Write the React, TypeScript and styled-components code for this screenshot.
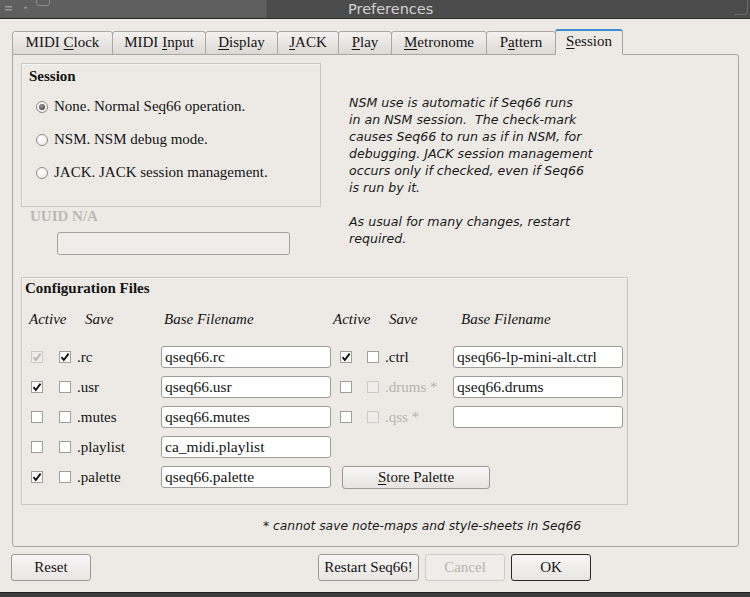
import styled, { createGlobalStyle, css } from 'styled-components';

const SERIF = `'Liberation Serif', 'Times New Roman', serif`;
const SANS = `'DejaVu Sans', 'Liberation Sans', sans-serif`;

const GlobalStyle = createGlobalStyle`
  html, body {
    margin: 0;
    padding: 0;
  }
  body {
    width: 750px;
    height: 597px;
    overflow: hidden;
    background: #edeae6;
    font-family: ${SERIF};
    color: #141414;
  }
  * {
    box-sizing: border-box;
  }
`;

const tabs = [
  { pre: 'MIDI ', key: 'C', post: 'lock', w: 101 },
  { pre: 'MIDI ', key: 'I', post: 'nput', w: 94 },
  { pre: '', key: 'D', post: 'isplay', w: 73 },
  { pre: '', key: 'J', post: 'ACK', w: 62 },
  { pre: '', key: 'P', post: 'lay', w: 54 },
  { pre: '', key: 'M', post: 'etronome', w: 96 },
  { pre: 'P', key: 'a', post: 'ttern', w: 70 },
  { pre: '', key: 'S', post: 'ession', w: 68, active: true },
];

type Box = 'on' | 'off' | 'dimOn' | 'dimOff';

interface FileRow {
  active: Box;
  save: Box;
  label: string;
  dim?: boolean;
  value: string;
}

const leftRows: FileRow[] = [
  { active: 'dimOn', save: 'on', label: '.rc', value: 'qseq66.rc' },
  { active: 'on', save: 'off', label: '.usr', value: 'qseq66.usr' },
  { active: 'off', save: 'off', label: '.mutes', value: 'qseq66.mutes' },
  { active: 'off', save: 'off', label: '.playlist', value: 'ca_midi.playlist' },
  { active: 'on', save: 'off', label: '.palette', value: 'qseq66.palette' },
];

const rightRows: (FileRow | null)[] = [
  { active: 'on', save: 'off', label: '.ctrl', value: 'qseq66-lp-mini-alt.ctrl' },
  { active: 'off', save: 'dimOff', label: '.drums *', dim: true, value: 'qseq66.drums' },
  { active: 'off', save: 'dimOff', label: '.qss *', dim: true, value: '' },
  null,
  null,
];

const NOTE = `NSM use is automatic if Seq66 runs
in an NSM session.  The check-mark
causes Seq66 to run as if in NSM, for
debugging. JACK session management
occurs only if checked, even if Seq66
is run by it.

As usual for many changes, restart
required.`;

function CheckBox({ state }: { state: Box }) {
  const dim = state === 'dimOn' || state === 'dimOff';
  const on = state === 'on' || state === 'dimOn';
  return (
    <StCheck $dim={dim}>
      {on && (
        <svg width="10" height="10" viewBox="0 0 10 10">
          <path d="M1.5 5.2 L3.8 8 L8.6 1.6" fill="none" stroke={dim ? '#b9b5b1' : '#111'} strokeWidth="1.9" />
        </svg>
      )}
    </StCheck>
  );
}

function App() {
  return (
    <StWindow>
      <GlobalStyle />
      <StTitleBar>
        <StTitleLeft>
          <svg width="60" height="18" viewBox="0 0 60 18">
            <rect x="5" y="6" width="7" height="1.5" fill="#9a9a9a" />
            <rect x="5" y="9" width="7" height="1.5" fill="#9a9a9a" />
            <rect x="24" y="7" width="3" height="1.5" fill="#9a9a9a" />
            <path d="M36.5 0 V3 a2.5 2.5 0 0 0 2.5 2.5 H47 a2.5 2.5 0 0 0 2.5 -2.5 V0" fill="none" stroke="#8a8a8a" />
          </svg>
        </StTitleLeft>
        <StTitleText>Preferences</StTitleText>
        <StTitleCorner />
      </StTitleBar>

      <StBody>
        <StTabBar>
          {tabs.map((t) => (
            <StTab key={t.key + t.post} $w={t.w} $active={t.active}>
              <span>
                {t.pre}
                <u>{t.key}</u>
                {t.post}
              </span>
            </StTab>
          ))}
        </StTabBar>

        <StPane>
          <StTopRow>
            <StLeftCol>
              <StSessionGroup>
                <StGroupTitle>Session</StGroupTitle>
                <StRadioList>
                  <StRadioRow>
                    <StRadio $checked />
                    <span>
                      None. Normal Se<u>q</u>66 operation.
                    </span>
                  </StRadioRow>
                  <StRadioRow>
                    <StRadio />
                    <span>NSM. NSM debug mode.</span>
                  </StRadioRow>
                  <StRadioRow>
                    <StRadio />
                    <span>JACK. JACK session management.</span>
                  </StRadioRow>
                </StRadioList>
              </StSessionGroup>
              <StUuidLabel>UUID N/A</StUuidLabel>
              <StUuidInput />
            </StLeftCol>
            <StNote>{NOTE}</StNote>
          </StTopRow>

          <StConfigGroup>
            <StConfigTitle>Configuration Files</StConfigTitle>
            <StHeaderGrid>
              <StHead $col={1} $shift={-2}>Active</StHead>
              <StHead $col={3} $shift={8}>Save</StHead>
              <StHead $col={4} $shift={3}>Base Filename</StHead>
              <StHead $col={5} $shift={-7}>Active</StHead>
              <StHead $col={7} $shift={4}>Save</StHead>
              <StHead $col={8} $shift={8}>Base Filename</StHead>
            </StHeaderGrid>
            <StFileGrid>
              {leftRows.map((row, i) => {
                const right = rightRows[i];
                return (
                  <StFileRow key={row.label}>
                    <CheckBox state={row.active} />
                    <CheckBox state={row.save} />
                    <StFileLabel>{row.label}</StFileLabel>
                    <StFileInput readOnly value={row.value} />
                    {right && (
                      <>
                        <CheckBox state={right.active} />
                        <CheckBox state={right.save} />
                        <StFileLabel $dim={right.dim}>{right.label}</StFileLabel>
                        <StFileInput readOnly value={right.value} />
                      </>
                    )}
                    {i === 4 && (
                      <StStoreButton>
                        <u>S</u>tore Palette
                      </StStoreButton>
                    )}
                  </StFileRow>
                );
              })}
            </StFileGrid>
          </StConfigGroup>

          <StFootnote>* cannot save note-maps and style-sheets in Seq66</StFootnote>
        </StPane>

        <StButtonRow>
          <StButton $w={80}>Reset</StButton>
          <StButtonGroup>
            <StButton $w={101}>Restart Seq66!</StButton>
            <StButton $w={80} disabled>
              Cancel
            </StButton>
            <StButton $w={80} $default>
              OK
            </StButton>
          </StButtonGroup>
        </StButtonRow>
      </StBody>

      <StBottomStrip />
    </StWindow>
  );
}

export default App;

const StWindow = styled.div`
  display: flex;
  flex-direction: column;
  width: 750px;
  height: 597px;
  background: #edeae6;
`;

const StTitleBar = styled.div`
  display: flex;
  align-items: stretch;
  height: 19px;
  background: #4b4b4b;
  border-bottom: 1px solid #2c2c2c;
`;

const StTitleLeft = styled.div`
  width: 267px;
  background: #5f5f5f;
  border-right: 1px solid #525252;
  border-bottom: 1px solid #555;
`;

const StTitleText = styled.div`
  flex: 1;
  padding-left: 81px;
  font-family: ${SANS};
  font-size: 14.5px;
  line-height: 18px;
  color: #d2d2d2;
`;

const StTitleCorner = styled.div`
  width: 14px;
  margin: 0 2px 3px 0;
  border: 1px solid #6a6a6a;
  border-top: none;
  border-left: none;
  border-radius: 0 0 4px 0;
`;

const StBody = styled.div`
  display: flex;
  flex-direction: column;
  padding: 10px 12px 0 12px;
`;

const StTabBar = styled.div`
  display: flex;
  align-items: flex-end;
  height: 26px;
  margin-bottom: -1px;
  position: relative;
  z-index: 1;
`;

const StTab = styled.div<{ $w: number; $active?: boolean }>`
  display: flex;
  align-items: center;
  justify-content: center;
  width: ${(p) => p.$w}px;
  height: 24px;
  margin-right: -1px;
  padding-bottom: 1px;
  border: 1px solid #aaa6a1;
  border-radius: 3px 3px 0 0;
  background: linear-gradient(#f4f2f0, #dcd8d4);
  font-size: 15px;
  white-space: nowrap;

  u {
    text-underline-offset: 2px;
  }

  ${(p) =>
    p.$active &&
    css`
      height: 26px;
      padding-bottom: 3px;
      border-top: 2px solid #3f8bd4;
      border-bottom: 1px solid #edeae6;
      background: #edeae6;
    `}
`;

const StPane = styled.div`
  display: flex;
  flex-direction: column;
  width: 727px;
  height: 493px;
  padding: 8px 0 0 8px;
  border: 1px solid #aaa6a1;
  border-radius: 0 3px 3px 3px;
`;

const StTopRow = styled.div`
  display: flex;
`;

const StLeftCol = styled.div`
  display: flex;
  flex-direction: column;
  width: 300px;
`;

const StSessionGroup = styled.div`
  height: 144px;
  padding: 3px 0 0 7px;
  border: 1px solid #c9c5c0;
  box-shadow: inset 1px 1px 0 #f7f5f3;
`;

const StGroupTitle = styled.div`
  font-size: 15px;
  font-weight: bold;
  line-height: 18px;
`;

const StRadioList = styled.div`
  display: flex;
  flex-direction: column;
  margin-top: 5px;
`;

const StRadioRow = styled.div`
  display: flex;
  align-items: center;
  gap: 6px;
  height: 33px;
  padding-left: 7px;
  font-size: 15px;
  white-space: nowrap;

  u {
    text-underline-offset: 2px;
  }
`;

const StRadio = styled.span<{ $checked?: boolean }>`
  position: relative;
  display: inline-block;
  width: 12px;
  height: 12px;
  border: 1px solid #8d8985;
  border-radius: 50%;
  background: radial-gradient(circle at 40% 35%, #ffffff, #ebe8e5);

  ${(p) =>
    p.$checked &&
    css`
      &::after {
        content: '';
        position: absolute;
        left: 2px;
        top: 2px;
        width: 6px;
        height: 6px;
        border-radius: 50%;
        background: radial-gradient(circle at 40% 35%, #9a9a9a, #2e2e2e);
      }
    `}
`;

const StUuidLabel = styled.div`
  padding-left: 9px;
  font-size: 15px;
  font-weight: bold;
  line-height: 18px;
  color: #bcb8b4;
`;

const StUuidInput = styled.div`
  width: 233px;
  height: 23px;
  margin: 7px 0 0 36px;
  border: 1px solid #a6a29d;
  border-radius: 3px;
  background: #efece9;
`;

const StNote = styled.div`
  margin: 31px 0 0 28px;
  font-family: ${SANS};
  font-size: 12.6px;
  font-style: italic;
  line-height: 17px;
  white-space: pre;
  color: #1a1a1a;
`;

const StConfigGroup = styled.div`
  width: 607px;
  height: 228px;
  margin-top: 22px;
  padding: 1px 0 0 3px;
  border: 1px solid #c9c5c0;
  box-shadow: inset 1px 1px 0 #f7f5f3;
`;

const StConfigTitle = styled.div`
  font-size: 15px;
  font-weight: bold;
  line-height: 18px;
`;

const COLUMNS = '28px 18px 84px 179px 27px 18px 68px 170px';

const StHeaderGrid = styled.div`
  display: grid;
  grid-template-columns: ${COLUMNS};
  margin: 13px 0 0 6px;
  height: 18px;
`;

const StHead = styled.div<{ $col: number; $shift: number }>`
  grid-column: ${(p) => p.$col};
  grid-row: 1;
  margin-left: ${(p) => p.$shift}px;
  font-size: 15px;
  font-style: italic;
  line-height: 18px;
  white-space: nowrap;
`;

const StFileGrid = styled.div`
  display: flex;
  flex-direction: column;
  margin: 14px 0 0 6px;
`;

const StFileRow = styled.div`
  display: grid;
  grid-template-columns: ${COLUMNS};
  align-items: center;
  height: 30px;
`;

const StCheck = styled.span<{ $dim?: boolean }>`
  display: flex;
  align-items: center;
  justify-content: center;
  width: 12px;
  height: 12px;
  border: 1px solid ${(p) => (p.$dim ? '#cdc9c5' : '#a19d99')};
  background: ${(p) => (p.$dim ? '#efece9' : '#ffffff')};
`;

const StFileLabel = styled.span<{ $dim?: boolean }>`
  font-size: 15px;
  white-space: nowrap;
  color: ${(p) => (p.$dim ? '#b7b3af' : '#141414')};
`;

const StFileInput = styled.input`
  width: 170px;
  height: 22px;
  padding: 0 3px;
  border: 1px solid #9f9b96;
  border-radius: 3px;
  background: #ffffff;
  font-family: ${SERIF};
  font-size: 15.5px;
  color: #141414;
  outline: none;
`;

const StStoreButton = styled.button`
  grid-column: 5 / span 4;
  justify-self: start;
  width: 148px;
  height: 23px;
  margin-left: 2px;
  padding: 0;
  border: 1px solid #9d9994;
  border-radius: 3px;
  background: linear-gradient(#f8f7f6, #e6e3e0);
  font-family: ${SERIF};
  font-size: 15px;
  color: #141414;

  u {
    text-underline-offset: 2px;
  }
`;

const StFootnote = styled.div`
  margin: 12px 0 0 242px;
  font-family: ${SANS};
  font-size: 12.3px;
  font-style: italic;
  line-height: 18px;
  color: #1a1a1a;
`;

const StButtonRow = styled.div`
  display: flex;
  justify-content: space-between;
  margin: 7px 0 0 -1px;
  padding-right: 147px;
`;

const StButtonGroup = styled.div`
  display: flex;
  gap: 6px;
`;

const StButton = styled.button<{ $w: number; $default?: boolean }>`
  width: ${(p) => p.$w}px;
  height: 27px;
  padding: 0;
  border: 1px solid ${(p) => (p.$default ? '#2a2a2a' : '#9d9994')};
  border-radius: 3px;
  background: linear-gradient(#f8f7f6, #e8e5e2);
  font-family: ${SERIF};
  font-size: 15px;
  color: #141414;

  &:disabled {
    border-color: #cfcbc7;
    background: #efece9;
    color: #b8b4b0;
  }
`;

const StBottomStrip = styled.div`
  height: 5px;
  margin-top: auto;
  background: #3d3d3d;
  border-top: 1px solid #1f1f1f;
`;
